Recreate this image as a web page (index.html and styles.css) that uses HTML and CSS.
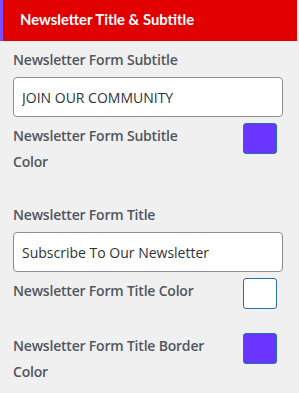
FILE: index.html
```html
<!DOCTYPE html>
<html lang="en">
  <head>
    <meta charset="UTF-8" />
    <meta name="viewport" content="width=device-width, initial-scale=1.0" />
    <title>Newsletter Title &amp; Subtitle</title>
    <link rel="stylesheet" href="styles.css">
  </head>
  <body>
    <div class="panel">
      <div class="panel-head">Newsletter Title &amp; Subtitle</div>

      <div class="panel-body">
        <div class="field">
          <label class="field-label">Newsletter Form Subtitle</label>
          <input type="text" class="text-input" value="JOIN OUR COMMUNITY" />
        </div>
        <div class="color-row">
          <span class="field-label">Newsletter Form Subtitle Color</span>
          <span class="swatch swatch-purple"></span>
        </div>

        <div class="field field-gap">
          <label class="field-label">Newsletter Form Title</label>
          <input type="text" class="text-input" value="Subscribe To Our Newsletter" />
        </div>
        <div class="color-row">
          <span class="field-label">Newsletter Form Title Color</span>
          <span class="swatch swatch-white"></span>
        </div>

        <div class="color-row row-gap">
          <span class="field-label">Newsletter Form Title Border Color</span>
          <span class="swatch swatch-purple"></span>
        </div>
      </div>
    </div>
  </body>
</html>
```

FILE: styles.css
```css
body {
  margin: 0;
  padding: 0;
  background-color: #f0f0f0;
  font-family: "Open Sans", "Noto Sans", sans-serif;
  color: #50575e;
}

.panel {
  width: 299px;
}

.panel-head {
  width: 297px;
  height: 41px;
  box-sizing: border-box;
  background-color: #e10000;
  border-left: 3px solid #7b4dff;
  color: #fff;
  font-family: "Lato", "Open Sans", sans-serif;
  font-size: 14.8px;
  font-weight: 700;
  line-height: 39px;
  padding-left: 17px;
}

.panel-body {
  display: flex;
  flex-direction: column;
  padding: 6px 16px 0 13px;
}

.field {
  display: flex;
  flex-direction: column;
  gap: 4px;
}

.field-gap {
  margin-top: 27px;
}

.field-label {
  font-size: 14px;
  font-weight: 600;
  letter-spacing: -0.2px;
  line-height: 26px;
  color: #50575e;
}

.text-input {
  height: 40px;
  box-sizing: border-box;
  border: 1px solid #8c8f94;
  border-radius: 4px;
  background-color: #fff;
  padding: 0 8px;
  font-family: "Open Sans", "Noto Sans", sans-serif;
  font-size: 14px;
  color: #2c3338;
  outline: none;
}

.color-row {
  display: flex;
  align-items: flex-start;
  justify-content: space-between;
  margin-top: 6px;
}

.color-row .field-label {
  width: 200px;
}

.row-gap {
  margin-top: 24px;
}

.swatch {
  width: 34px;
  height: 31px;
  box-sizing: border-box;
  border: 1px solid #2271b1;
  border-radius: 3px;
  margin-right: 6px;
  flex-shrink: 0;
}

.swatch-purple {
  background-color: #6a35ff;
}

.swatch-white {
  background-color: #fff;
}
```
